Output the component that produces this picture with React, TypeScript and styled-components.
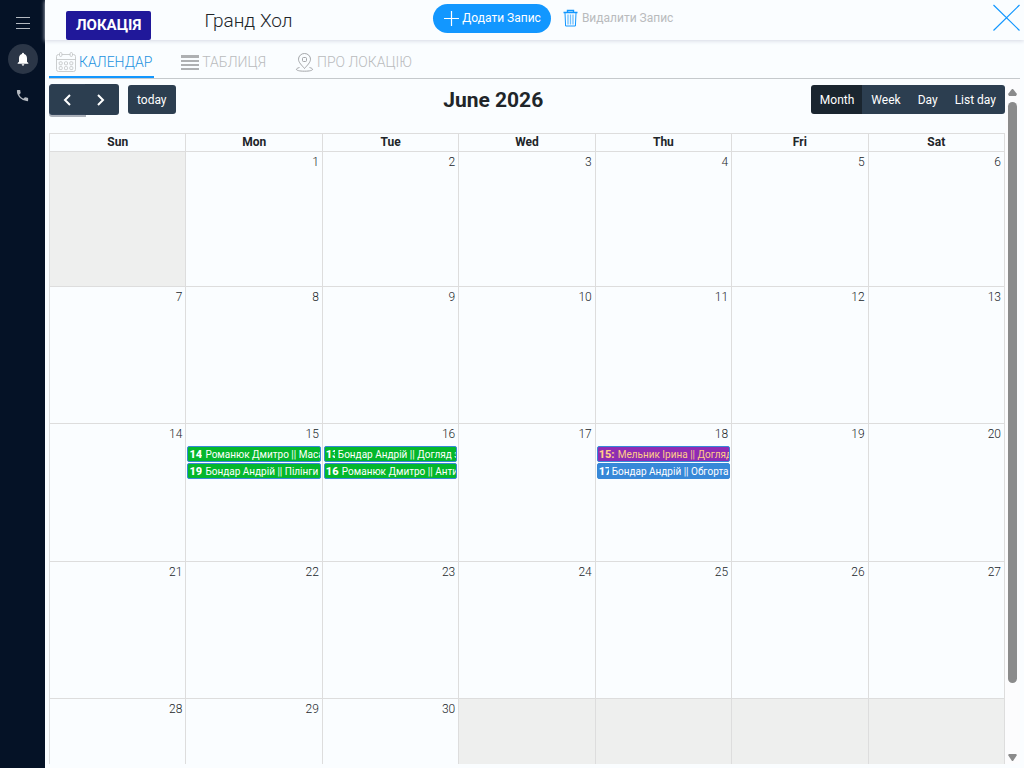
import React from "react";
import styled, { createGlobalStyle, css } from "styled-components";

const GlobalStyle = createGlobalStyle`
  *, *::before, *::after { box-sizing: border-box; }
  html, body { margin: 0; height: 100%; }
  body {
    font-family: Roboto, "Liberation Sans", sans-serif;
    background: #fafdff;
    color: #212529;
    overflow: hidden;
  }
  button { font-family: inherit; border: 0; padding: 0; cursor: pointer; }
  h1, h2 { margin: 0; }
`;

const Page = styled.div`
  display: flex;
  height: 100vh;
`;

const Sidebar = styled.nav`
  flex: 0 0 45px;
  display: flex;
  flex-direction: column;
  align-items: center;
  gap: 6px;
  padding-top: 8px;
  background: #051226;
`;

const SideButton = styled.button<{ $active?: boolean }>`
  display: flex;
  align-items: center;
  justify-content: center;
  width: 30px;
  height: 30px;
  border-radius: 50%;
  background: ${(p) => (p.$active ? "#2b3647" : "transparent")};
  color: ${(p) => (p.$active ? "#fff" : "#b4b9c0")};
`;

const Main = styled.main`
  flex: 1;
  min-width: 0;
  display: flex;
  flex-direction: column;
`;

const Header = styled.header`
  flex: 0 0 40px;
  display: grid;
  grid-template-columns: 38.5% auto 1fr;
  align-items: start;
  padding: 4px 4px 0 21px;
  box-shadow: 0 1px 4px #d5d9e4;
`;

const HeaderSide = styled.div<{ $end?: boolean }>`
  display: flex;
  justify-content: ${(p) => (p.$end ? "space-between" : "flex-start")};
`;

const Badge = styled.span`
  margin-top: 7px;
  height: 29px;
  padding: 0 10px;
  border-radius: 2px;
  background: #20189a;
  color: #fff;
  font-size: 15px;
  font-weight: 700;
  line-height: 28px;
`;

const Title = styled.h1`
  margin: 5px 0 0 53px;
  font-size: 19px;
  font-weight: 300;
  line-height: 24px;
`;

const AddButton = styled.button`
  display: flex;
  align-items: center;
  gap: 3px;
  height: 29px;
  padding: 0 10px 2px;
  border-radius: 15px;
  background: #1297ff;
  color: #fff;
  font-size: 12px;
  white-space: nowrap;
`;

const DeleteButton = styled.button`
  display: flex;
  align-items: center;
  gap: 4px;
  height: 29px;
  margin-left: 12px;
  padding-bottom: 2px;
  background: transparent;
  color: #b9bbbd;
  font-size: 12px;
  white-space: nowrap;
`;

const CloseButton = styled.button`
  display: flex;
  background: transparent;
`;

const Tabs = styled.div`
  flex: 0 0 39px;
  display: flex;
  align-items: flex-end;
  gap: 20px;
  margin: 0 4px;
  border-bottom: 1px solid #c5c9cc;
`;

const Tab = styled.button<{ $active?: boolean }>`
  display: flex;
  align-items: center;
  gap: 3px;
  height: 30px;
  padding: 0 2px 0 7px;
  background: transparent;
  border-bottom: 2px solid ${(p) => (p.$active ? "#1297ff" : "transparent")};
  color: ${(p) => (p.$active ? "#1c92e0" : "#b9bbbd")};
  font-size: 14px;
  font-weight: 300;
`;

const Content = styled.div`
  flex: 1;
  min-height: 0;
  display: flex;
  margin: 0 4px 4px;
`;

const Calendar = styled.section`
  flex: 1;
  min-width: 0;
  overflow: hidden;
`;

const Toolbar = styled.div`
  display: flex;
  justify-content: space-between;
  align-items: flex-start;
  height: 54px;
  padding-top: 5px;
`;

const ToolGroup = styled.div`
  display: flex;
  align-items: center;
`;

const ToolButton = styled.button<{ $first?: boolean; $last?: boolean; $active?: boolean }>`
  height: 29px;
  padding: 0 9px;
  border-radius: ${(p) => `${p.$first ? 3 : 0}px ${p.$last ? 3 : 0}px ${p.$last ? 3 : 0}px ${p.$first ? 3 : 0}px`};
  background: ${(p) => (p.$active ? "#1a252f" : "#2c3e50")};
  color: #fff;
  font-size: 12px;
`;

const ViewButton = styled(ToolButton)`
  margin-top: 1px;

  & + & {
    margin-left: -1px;
  }
`;

const NavButton = styled(ToolButton)<{ $focused?: boolean }>`
  display: flex;
  align-items: center;
  justify-content: center;
  width: ${(p) => (p.$focused ? 37 : 34)}px;
  height: 31px;
  padding: 0 2px 0 0;
  ${(p) =>
    p.$focused
      ? css`
          border: 1px solid #34455a;
          box-shadow: 0 2px 0 #aab0b9;
        `
      : css`
          margin-left: -1px;
        `}
`;

const TodayButton = styled(ToolButton)`
  margin-left: 9px;
`;

const MonthTitle = styled.h2`
  font-size: 21px;
  font-weight: 700;
  line-height: 32px;
`;

const Grid = styled.table`
  width: 100%;
  table-layout: fixed;
  border-collapse: collapse;
`;

const DayHead = styled.th`
  height: 18px;
  padding: 0 0 1px;
  border: 1px solid #ddd;
  font-size: 12px;
  font-weight: 700;
  line-height: 15px;
`;

const Week = styled.tr<{ $height: number }>`
  height: ${(p) => p.$height}px;
`;

const DayCell = styled.td<{ $outside: boolean }>`
  padding: 0 1px;
  border: 1px solid #ddd;
  vertical-align: top;
  background: ${(p) => (p.$outside ? "#eeefee" : "transparent")};
`;

const DayNumber = styled.div`
  padding: 2px 2px 0;
  height: 22px;
  text-align: right;
  font-size: 12px;
  font-weight: 300;
  line-height: 16px;
`;

const palette = {
  green: { fill: "#04b72c", text: "#fff" },
  purple: { fill: "#8e2cb4", text: "#ffcc88" },
  blue: { fill: "#3788d8", text: "#fff" },
};

const EventLink = styled.a<{ $tone: keyof typeof palette }>`
  display: flex;
  height: 16px;
  margin-bottom: 1px;
  padding-left: 1px;
  border: 1px solid #3788d8;
  border-radius: 2px;
  background: ${(p) => palette[p.$tone].fill};
  color: ${(p) => palette[p.$tone].text};
  font-size: 10px;
  line-height: 15px;
  text-decoration: none;
  white-space: nowrap;
  overflow: hidden;
`;

const EventTime = styled.span<{ $width: number }>`
  flex: none;
  width: ${(p) => p.$width}px;
  margin-right: 3px;
  overflow: hidden;
  font-size: 11px;
  font-weight: 800;
`;

const Scrollbar = styled.div`
  flex: 0 0 15px;
  display: flex;
  flex-direction: column;
  align-items: center;
  gap: 5px;
  padding: 10px 0 3px;
  background: #fcfcfd;
`;

const Track = styled.div`
  flex: 1;
`;

const Thumb = styled.div`
  width: 9px;
  height: 90%;
  border-radius: 5px;
  background: #8b8b8b;
`;

type CalEvent = { time: string; timeWidth: number; title: string; tone: keyof typeof palette };

const events: Record<number, CalEvent[]> = {
  15: [
    { time: "14", timeWidth: 13, title: "Романюк Дмитро || Масаж", tone: "green" },
    { time: "19", timeWidth: 13, title: "Бондар Андрій || Пілінги", tone: "green" },
  ],
  16: [
    { time: "13:00", timeWidth: 9, title: "Бондар Андрій || Догляд за", tone: "green" },
    { time: "16", timeWidth: 13, title: "Романюк Дмитро || Антистрес", tone: "green" },
  ],
  18: [
    { time: "15:00", timeWidth: 16, title: "Мельник Ірина || Догляд", tone: "purple" },
    { time: "17", timeWidth: 10, title: "Бондар Андрій || Обгортання", tone: "blue" },
  ],
};

const dayNames = ["Sun", "Mon", "Tue", "Wed", "Thu", "Fri", "Sat"];
const weekHeights = [135, 137, 138, 137, 137];
const viewNames = ["Month", "Week", "Day", "List day"];

const MenuIcon = () => (
  <svg width="14" height="12" viewBox="0 0 14 12" stroke="currentColor" shapeRendering="crispEdges">
    <path d="M0 .5h14M0 6.5h14M0 11.5h14" />
  </svg>
);

const BellIcon = () => (
  <svg width="16" height="16" viewBox="0 0 24 24" fill="currentColor">
    <path d="M12 22a2 2 0 0 0 2-2h-4a2 2 0 0 0 2 2zm6-6v-5c0-3.07-1.64-5.64-4.5-6.32V4a1.5 1.5 0 0 0-3 0v.68C7.63 5.36 6 7.92 6 11v5l-2 2v1h16v-1z" />
  </svg>
);

const PhoneIcon = () => (
  <svg width="15" height="15" viewBox="0 0 24 24" fill="currentColor">
    <path d="M6.62 10.79a15.05 15.05 0 0 0 6.59 6.59l2.2-2.2a1 1 0 0 1 1.02-.24c1.12.37 2.33.57 3.57.57a1 1 0 0 1 1 1V20a1 1 0 0 1-1 1A17 17 0 0 1 3 4a1 1 0 0 1 1-1h3.5a1 1 0 0 1 1 1c0 1.25.2 2.45.57 3.57a1 1 0 0 1-.25 1.02z" />
  </svg>
);

const PlusIcon = () => (
  <svg width="16" height="16" viewBox="0 0 16 16" stroke="currentColor" strokeWidth="1.2">
    <path d="M8.500 1v15M1 8.500h15" />
  </svg>
);

const TrashIcon = () => (
  <svg width="15" height="18" viewBox="0 0 15 18" fill="none" stroke="#1297ff">
    <path d="M.5 3.5h14M4.5 3V1.5h6V3" strokeWidth="1.4" />
    <path d="M2 4l.6 13h9.800L13 4" />
    <path d="M5 5.500v10M7.500 5.500v10M10 5.500v10" strokeWidth="1.3" opacity=".6" />
  </svg>
);

const CloseIcon = () => (
  <svg width="27" height="27" viewBox="0 0 27 27" stroke="#1297ff" strokeWidth="1.2">
    <path d="M.5 1l26 25.500M26.500 1L.5 26.500" />
  </svg>
);

const CalendarIcon = () => (
  <svg width="20" height="20" viewBox="0 0 20 20" fill="none" stroke="#bfc1c3" strokeWidth=".8">
    <path d="M3.500 2.500H2.500a2 2 0 0 0-2 2v13a2 2 0 0 0 2 2h15a2 2 0 0 0 2-2v-13a2 2 0 0 0-2-2h-1M6 2.500h8M.5 7.500h19" />
    <rect x="3.5" y=".5" width="2.4" height="4" rx="1.2" />
    <rect x="14.1" y=".5" width="2.4" height="4" rx="1.2" />
    {[3.2, 8.5, 13.8].map((x) =>
      [9.8, 14.6].map((y) => <rect key={`${x}-${y}`} x={x} y={y} width="3" height="3" rx=".8" />)
    )}
  </svg>
);

const RowsIcon = () => (
  <svg width="18" height="15" viewBox="0 0 18 15" fill="#aeb0b2">
    <path d="M0 0h18v3H0zM0 5h18v2H0zM0 9h18v2H0zM0 13h18v2H0z" />
  </svg>
);

const PinIcon = () => (
  <svg width="19" height="19" viewBox="0 0 19 19" fill="none" stroke="#9b9da0" strokeWidth=".9">
    <path d="M9.5 15.5C7 12.5 3.5 9.5 3.5 6.2a6 5.7 0 0 1 12 0c0 3.300-3.500 6.300-6 9.300z" />
    <rect x="7.500" y="4.500" width="4" height="4" rx="1" />
    <path d="M4.500 14.500C-1 16 1 18.200 9.500 18.200S20 16 14.500 14.500" />
  </svg>
);

const Chevron = ({ right }: { right?: boolean }) => (
  <svg width="10" height="13" viewBox="0 0 10 13" fill="none" stroke="#fff" strokeWidth="2">
    <path d={right ? "M2 2l5 5-5 5" : "M8 2l-5 5 5 5"} />
  </svg>
);

const Arrow = ({ down }: { down?: boolean }) => (
  <svg width="9" height="8" viewBox="0 0 9 8" fill="#8b8b8b">
    <path d={down ? "M0 2L1 1h7l1 1-4 6h-1z" : "M4 0h1l4 5-1 2H1L0 5z"} />
  </svg>
);

export default function App() {
  return (
    <Page>
      <GlobalStyle />
      <Sidebar>
        <SideButton aria-label="Menu"><MenuIcon /></SideButton>
        <SideButton $active aria-label="Notifications"><BellIcon /></SideButton>
        <SideButton aria-label="Calls"><PhoneIcon /></SideButton>
      </Sidebar>
      <Main>
        <Header>
          <HeaderSide>
            <Badge>ЛОКАЦІЯ</Badge>
            <Title>Гранд Хол</Title>
          </HeaderSide>
          <AddButton><PlusIcon />Додати Запис</AddButton>
          <HeaderSide $end>
            <DeleteButton><TrashIcon />Видалити Запис</DeleteButton>
            <CloseButton aria-label="Close"><CloseIcon /></CloseButton>
          </HeaderSide>
        </Header>
        <Tabs>
          <Tab $active><CalendarIcon />КАЛЕНДАР</Tab>
          <Tab><RowsIcon />ТАБЛИЦЯ</Tab>
          <Tab><PinIcon />ПРО ЛОКАЦІЮ</Tab>
        </Tabs>
        <Content>
          <Calendar>
            <Toolbar>
              <ToolGroup>
                <NavButton $first $focused aria-label="Previous"><Chevron /></NavButton>
                <NavButton $last aria-label="Next"><Chevron right /></NavButton>
                <TodayButton $first $last>today</TodayButton>
              </ToolGroup>
              <MonthTitle>June 2026</MonthTitle>
              <ToolGroup>
                {viewNames.map((name, i) => (
                  <ViewButton key={name} $first={i === 0} $active={i === 0} $last={i === viewNames.length - 1}>
                    {name}
                  </ViewButton>
                ))}
              </ToolGroup>
            </Toolbar>
            <Grid>
              <thead>
                <tr>{dayNames.map((d) => <DayHead key={d} scope="col">{d}</DayHead>)}</tr>
              </thead>
              <tbody>
                {weekHeights.map((height, week) => (
                  <Week key={week} $height={height}>
                    {dayNames.map((name, i) => {
                      const day = week * 7 + i;
                      const inMonth = day >= 1 && day <= 30;
                      return (
                        <DayCell key={name} $outside={!inMonth}>
                          {inMonth && <DayNumber>{day}</DayNumber>}
                          {inMonth && events[day]?.map((e) => (
                            <EventLink key={e.title} href="#" $tone={e.tone}>
                              <EventTime $width={e.timeWidth}>{e.time}</EventTime>
                              {e.title}
                            </EventLink>
                          ))}
                        </DayCell>
                      );
                    })}
                  </Week>
                ))}
              </tbody>
            </Grid>
          </Calendar>
          <Scrollbar aria-hidden="true">
            <Arrow />
            <Track><Thumb /></Track>
            <Arrow down />
          </Scrollbar>
        </Content>
      </Main>
    </Page>
  );
}
